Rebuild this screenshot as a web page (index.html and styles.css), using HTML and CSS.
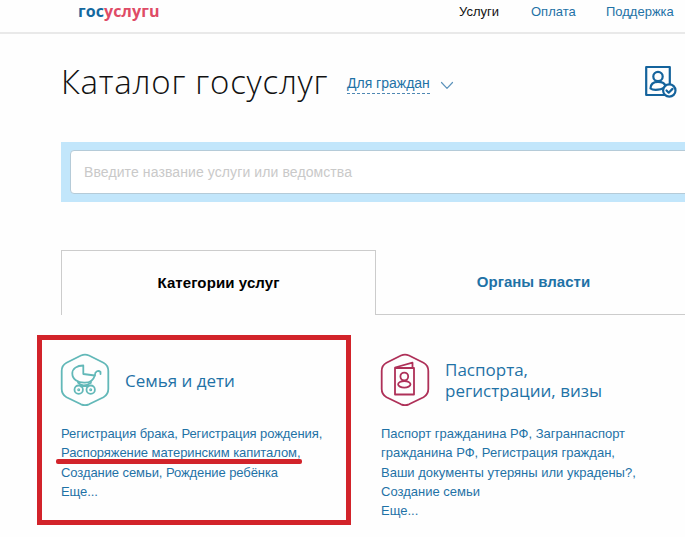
FILE: index.html
```
<!DOCTYPE html>
<html lang="ru">
  <head>
    <meta charset="utf-8">
    <title>Каталог госуслуг</title>
    <link rel="stylesheet" href="styles.css">
  </head>
  <body>

    <!-- header -->
    <header class="header">
      <a class="logo" href="#">гос<span>услугu</span></a>
      <nav class="menu">
        <a class="active" href="#">Услуги</a>
        <a class="pay" href="#">Оплата</a>
        <a class="help" href="#">Поддержка</a>
      </nav>
    </header>

    <!-- title -->
    <div class="title">
      <h1>Каталог госуслуг</h1>
      <a class="audience" href="#">Для граждан</a>
      <svg class="arrow" width="14" height="9" viewBox="0 0 14 9">
        <path d="M1.5 1.5L7 7.3L12.5 1.5"/>
      </svg>
      <svg class="profile" width="34" height="36" viewBox="0 0 34 36">
        <rect x="2.2" y="3" width="23.6" height="28"/>
        <circle cx="14" cy="12.500" r="4.700"/>
        <path d="M6.500 24.500C6.500 20 9.500 17.800 14 17.800S21 20 21.500 22C19 26.500 9 26.500 6.500 24.500Z"/>
        <circle class="badge" cx="25.300" cy="26.500" r="6.200"/>
        <path d="M22.500 26.500l2.200 2.200l3.800-3.800"/>
      </svg>
    </div>

    <!-- search -->
    <div class="search">
      <input type="text" placeholder="Введите название услуги или ведомства">
    </div>

    <!-- tabs -->
    <div class="tabs">
      <a class="tab current" href="#">Категории услуг</a>
      <a class="tab" href="#">Органы власти</a>
    </div>

    <!-- categories -->
    <div class="cards">
      <section class="card marked">
        <div class="head">
          <svg class="icon family" width="50" height="54" viewBox="0 0 50 54">
            <path d="M21 2.500Q25 0.800 29 2.500L43.500 9.700Q48.300 12.300 48.300 18V36Q48.300 41.500 43.500 44.300L29 51.300Q25 53 21 51.300L6.500 44.300Q1.700 41.500 1.700 36V18Q1.700 12.300 6.500 9.700Z"/>
            <path d="M23.300 12.500V21L34.800 22.500C33.500 27 30 29.700 25 29.700C17.500 30 12.300 26 12.300 20.500C12.300 15.500 17 12.500 23.300 12.500Z"/>
            <path d="M34.800 22.500C35 18 38.500 17 40.500 19V21M18 29.700C21 33 26 33 31 29.700M21 33.500L28 32M28 33.500L21 32"/>
            <circle cx="18.700" cy="36.700" r="4.200"/>
            <circle cx="30.700" cy="36.700" r="4.200"/>
            <circle cx="18.700" cy="36.700" r="0.600"/>
            <circle cx="30.700" cy="36.700" r="0.600"/>
          </svg>
          <h2>Семья и дети</h2>
        </div>
        <p>
          Регистрация брака, Регистрация рождения,<br>
          <span class="underlined">Распоряжение материнским капиталом,</span><br>
          Создание семьи, Рождение ребёнка<br>
          Еще...
        </p>
      </section>

      <section class="card passports">
        <div class="head">
          <svg class="icon passport" width="50" height="54" viewBox="0 0 50 54">
            <path d="M21 2.500Q25 0.800 29 2.500L43.500 9.700Q48.300 12.300 48.300 18V36Q48.300 41.500 43.500 44.300L29 51.300Q25 53 21 51.300L6.500 44.300Q1.700 41.500 1.700 36V18Q1.700 12.300 6.500 9.700Z"/>
            <path d="M15 15H34V41.500H15ZM15 14.500L32.500 9.700V14.500"/>
            <circle cx="24.300" cy="23.500" r="3.900"/>
            <ellipse cx="24.300" cy="31.300" rx="6.200" ry="3.300"/>
          </svg>
          <h2>Паспорта,<br>регистрации, визы</h2>
        </div>
        <p>
          Паспорт гражданина РФ, Загранпаспорт<br>
          гражданина РФ, Регистрация граждан,<br>
          Ваши документы утеряны или украдены?,<br>
          Создание семьи<br>
          Еще...
        </p>
      </section>
    </div>

  </body>
</html>
```

FILE: styles.css
```
body {
    margin: 0;
    height: 537px;
    overflow: hidden;
    background-color: #fefefe;
    color: #1f72a6;
    font-family: "Liberation Sans", Arial, sans-serif;
    font-size: 13px;
    }

a {
    color: #1f72a6;
    text-decoration: none;
    }

svg {
    fill: none;
    stroke-linecap: round;
    stroke-linejoin: round;
    flex-shrink: 0;
    }

.header {
    display: flex;
    height: 32px;
    border-bottom: 2px solid #e9e9e9;
    }

.logo {
    width: 381px;
    margin-left: 78px;
    font-family: "Open Sans", sans-serif;
    font-size: 16px;
    font-weight: bold;
    line-height: 22px;
    letter-spacing: 0.1px;
    color: #14689f;
    }

.logo span {
    color: #df4b66;
    }

.menu {
    display: flex;
    line-height: 24px;
    }

.menu .active {
    width: 72px;
    color: #111;
    }

.menu .pay {
    width: 75px;
    }

.title {
    display: flex;
    height: 108px;
    padding-left: 61px;
    }

h1 {
    width: 286px;
    margin: 24px 0 0;
    font-family: "Open Sans", sans-serif;
    font-size: 33px;
    font-weight: 300;
    line-height: 48px;
    letter-spacing: 0.75px;
    color: #111;
    white-space: nowrap;
    }

.audience {
    height: 19px;
    margin-top: 40px;
    border-bottom: 1px dashed #4f88b3;
    font-size: 14px;
    line-height: 19px;
    white-space: nowrap;
    }

.arrow {
    margin: 47px 0 0 10px;
    stroke: #5c93bb;
    stroke-width: 1.2;
    }

.profile {
    margin: 30px 7px 0 auto;
    stroke: #14639c;
    stroke-width: 2.2;
    }

.profile .badge {
    fill: #fff;
    }

.search {
    height: 60px;
    margin-left: 61px;
    padding: 8px 0 8px 9px;
    box-sizing: border-box;
    background-color: #c2e6fb;
    }

.search input {
    display: block;
    width: 640px;
    height: 44px;
    padding: 0 13px;
    border: 1px solid #b5cbd8;
    border-radius: 4px;
    box-sizing: border-box;
    background-color: #fff;
    font-family: "Liberation Sans", Arial, sans-serif;
    font-size: 14px;
    letter-spacing: 0.1px;
    }

.search input::placeholder {
    color: #c9c9c9;
    }

.tabs {
    display: flex;
    height: 65px;
    margin: 48px 0 0 61px;
    }

.tab {
    width: 315px;
    box-sizing: border-box;
    border-bottom: 1px solid #ccc;
    font-size: 15px;
    font-weight: bold;
    line-height: 64px;
    text-align: center;
    flex-shrink: 0;
    }

.current {
    border: 1px solid #ccc;
    border-bottom: none;
    letter-spacing: 0.1px;
    color: #000;
    }

.cards {
    display: flex;
    margin: 20px 0 0 37px;
    }

.card {
    width: 314px;
    height: 190px;
    padding: 18px 0 0 30px;
    box-sizing: border-box;
    flex-shrink: 0;
    }

.marked {
    padding: 13px 0 0 19px;
    border: 5px solid #d2232a;
    letter-spacing: -0.08px;
    }

.head {
    display: flex;
    align-items: center;
    height: 54px;
    margin-left: -1px;
    letter-spacing: 0;
    }

.icon {
    stroke-width: 1.8;
    }

.family {
    stroke: #62b8b8;
    }

.passport {
    stroke: #ae3058;
    }

h2 {
    margin: 0 0 0 15px;
    font-family: "Open Sans", sans-serif;
    font-size: 17px;
    font-weight: 500;
    line-height: 21px;
    white-space: nowrap;
    }

.card p {
    margin: 17px 0 0;
    line-height: 19.3px;
    white-space: nowrap;
    }

.underlined {
    position: relative;
    }

/* red marker line */
.underlined::after {
    content: "";
    position: absolute;
    left: -5px;
    right: -2px;
    bottom: -4px;
    height: 5px;
    border-radius: 2px;
    background-color: #d2232a;
    }
```
